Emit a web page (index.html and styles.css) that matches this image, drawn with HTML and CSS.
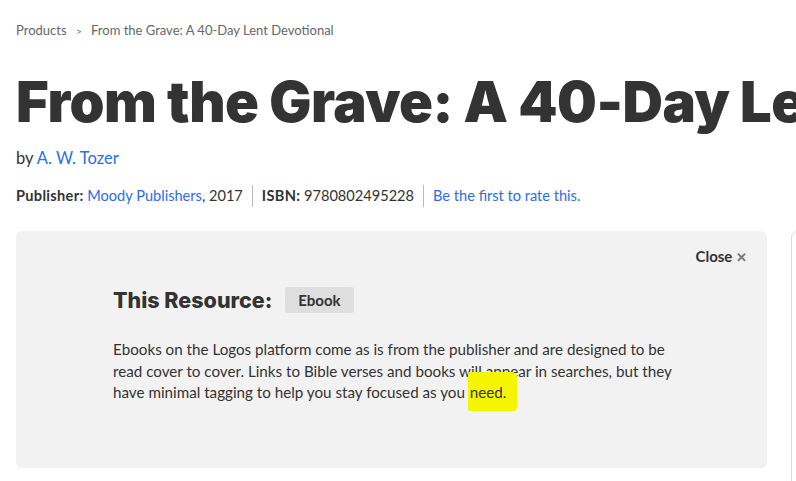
FILE: index.html
```html
<!DOCTYPE html>
<html lang="en">
<head>
  <meta charset="UTF-8" />
  <title>From the Grave: A 40-Day Lent Devotional</title>
  <link rel="stylesheet" href="styles.css">
</head>
<body>

<div class="page">
  <nav class="crumbs">
    <a href="#">Products</a>
    <span class="sep">&gt;</span>
    <span>From the Grave: A 40-Day Lent Devotional</span>
  </nav>

  <h1 class="title">From the Grave: A 40-Day Lent Devotional</h1>

  <p class="byline">by <a href="#">A. W. Tozer</a></p>

  <div class="meta">
    <span class="meta-item"><b>Publisher:</b> <a href="#">Moody Publishers</a>, 2017</span>
    <span class="meta-item"><b>ISBN:</b> 9780802495228</span>
    <span class="meta-item"><a href="#">Be the first to rate this.</a></span>
  </div>

  <div class="row">
    <div class="panel">
      <button class="close">Close <span class="x">&#x2715;</span></button>
      <div class="panel-body">
        <div class="resource">
          <h2>This Resource:</h2>
          <span class="badge">Ebook</span>
        </div>
        <p class="desc">Ebooks on the Logos platform come as is from the publisher and are designed to be read cover to cover. Links to Bible verses and books will appear in searches, but they have minimal tagging to help you stay focused as you <span class="mark">need.</span></p>
      </div>
    </div>
    <div class="side"></div>
  </div>
</div>

</body>
</html>
```

FILE: styles.css
```css
body {
  margin: 0;
  font-family: Lato, "Noto Sans", sans-serif;
  color: #333;
  background: #fff;
  overflow: hidden;
}

a {
  color: #2a6ee8;
  text-decoration: none;
}

.page {
  padding: 0 0 0 16px;
  white-space: nowrap;
}

.crumbs {
  padding-top: 22px;
  font-size: 13px;
  color: #666;
}

.crumbs a {
  color: #666;
}

.crumbs .sep {
  font-size: 10px;
  margin: 0 6px;
}

.title {
  margin: 32px 0 0;
  font-family: Inter, Lato, sans-serif;
  font-weight: 900;
  font-size: 56px;
  line-height: 64px;
  letter-spacing: -0.5px;
  color: #333;
}

.byline {
  margin: 14px 0 0;
  font-size: 16.5px;
}

.meta {
  display: flex;
  margin-top: 17px;
  font-size: 14.6px;
  line-height: 22px;
}

.meta b {
  letter-spacing: 0.3px;
}

.meta-item {
  padding: 0 9px;
  border-left: 1px solid #bbb;
}

.meta-item:first-child {
  padding-left: 0;
  border-left: none;
}

.row {
  display: flex;
  gap: 24px;
  margin-top: 24px;
}

.panel {
  position: relative;
  flex: 0 0 751px;
  height: 237px;
  background: #f2f2f2;
  border-radius: 6px;
  white-space: normal;
}

.close {
  position: absolute;
  top: 16px;
  right: 20px;
  border: none;
  background: none;
  font-family: inherit;
  font-size: 15px;
  font-weight: 700;
  color: #333;
  padding: 0;
}

.close .x {
  color: #777;
  font-weight: 700;
  font-size: 13px;
}

.panel-body {
  padding: 56px 0 0 97px;
  width: 572px;
}

.resource {
  display: flex;
  align-items: center;
  gap: 13px;
}

.resource h2 {
  margin: 0;
  font-family: Inter, Lato, sans-serif;
  font-weight: 800;
  font-size: 21.5px;
}

.badge {
  background: #dedede;
  border-radius: 3px;
  padding: 4px 13px;
  font-size: 15px;
  font-weight: 700;
}

.desc {
  margin: 26px 0 0;
  font-size: 15.2px;
  line-height: 21.5px;
}

.mark {
  background: #f5f500;
  padding: 11px 11px 10px 2px;
  border-radius: 2px 5px 4px 1px;
  margin-left: -1px;
}

.side {
  flex: 0 0 200px;
  height: 260px;
  border: 1px solid #ddd;
  border-radius: 6px;
}
```
